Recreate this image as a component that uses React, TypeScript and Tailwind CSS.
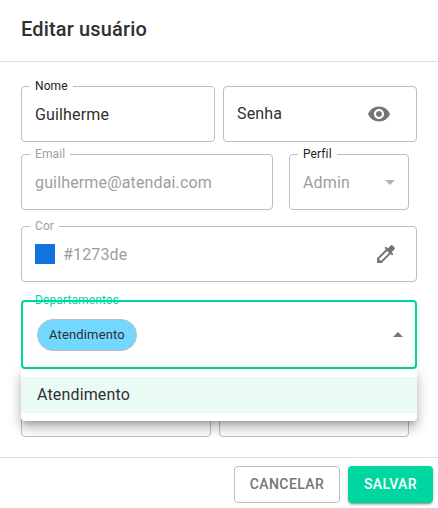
import type { ReactNode } from "react";

type FieldProps = {
  label?: string;
  muted?: boolean;
  className?: string;
  children?: ReactNode;
};

function Field({ label, muted, className = "", children }: FieldProps) {
  return (
    <fieldset
      className={`flex min-w-0 items-center rounded border border-[#bdbdbd] pl-[13px] ${
        label ? "-mt-[5px] h-[61px] pb-[5px]" : "h-14"
      } ${muted ? "text-[#9e9e9e]" : "text-[#303030]"} ${className}`}
    >
      {label && (
        <legend
          className={`-ml-[5px] h-[11px] px-[5px] text-[12px] leading-[11px] tracking-[0.11px] ${
            muted ? "text-[#9e9e9e]" : "text-[#212121]"
          }`}
        >
          {label}
        </legend>
      )}
      {children}
    </fieldset>
  );
}

function Icon({ d, className = "fill-[#757575]" }: { d: string; className?: string }) {
  return (
    <svg viewBox="0 0 24 24" className={`size-6 shrink-0 ${className}`}>
      <path d={d} />
    </svg>
  );
}

const EYE =
  "M12 4.5C7 4.5 2.73 7.61 1 12c1.73 4.39 6 7.5 11 7.5s9.27-3.11 11-7.5c-1.73-4.39-6-7.5-11-7.5zM12 17c-2.76 0-5-2.24-5-5s2.24-5 5-5 5 2.24 5 5-2.24 5-5 5zm0-8c-1.66 0-3 1.34-3 3s1.34 3 3 3 3-1.34 3-3-1.34-3-3-3z";
const DROPPER =
  "M20.71 5.63l-2.34-2.34c-.39-.39-1.02-.39-1.41 0l-3.12 3.12-1.93-1.91-1.41 1.41 1.42 1.42L3 16.25V21h4.75l8.92-8.92 1.42 1.42 1.41-1.41-1.92-1.92 3.12-3.12c.4-.4.4-1.03.01-1.42zM6.92 19L5 17.08l8.06-8.06 1.92 1.92L6.92 19z";

export default function App() {
  return (
    <div className="flex h-[508px] w-[438px] flex-col overflow-hidden bg-white font-['Roboto',sans-serif] text-[16px] leading-6 tracking-[0.15px] text-[#303030]">
      <header className="flex h-[62px] shrink-0 items-center border-b border-[#e0e0e0] px-[21px] pb-1">
        <h2 className="text-[20px] leading-8 font-medium">Editar usuário</h2>
      </header>

      <main className="flex h-[395px] shrink-0 flex-col pt-6 pr-[21px] pl-[21px]">
        <div className="flex gap-2">
          <Field label="Nome" className="w-[194px]">
            <span className="pt-0.5">Guilherme</span>
          </Field>
          <Field className="w-[194px] justify-between pr-[25px]">
            <span>Senha</span>
            <Icon d={EYE} />
          </Field>
        </div>

        <div className="mt-3 flex gap-4">
          <Field label="Email" muted className="w-[252px]">
            <span className="pt-0.5">guilherme@atendai.com</span>
          </Field>
          <Field label="Perfil" className="w-[120px] justify-between pr-[6px]">
            <span className="pt-0.5 text-[#9e9e9e]">Admin</span>
            <Icon d="M7 10l5 5 5-5z" className="fill-[#b3b3b3]" />
          </Field>
        </div>

        <div className="mt-4 flex">
          <Field label="Cor" muted className="w-[396px] pr-[18px]">
            <span className="mr-2 size-5 bg-[#1273de]" />
            <span className="flex-1 pt-0.5">#1273de</span>
            <Icon d={DROPPER} />
          </Field>
        </div>

        <div className="relative mt-[18px] flex h-[69px] shrink-0 items-center justify-between rounded border-2 border-[#00d69f] pr-[5px] pl-[14px]">
          <span className="absolute -top-[10px] left-3 text-[12px] leading-4 tracking-[0.11px] text-[#00d69f]">
            Departamentos
          </span>
          <span className="flex h-8 items-center rounded-full border border-[#bdbdbd] bg-[#73d8ff] px-[11px] text-[13px] leading-5">
            Atendimento
          </span>
          <Icon d="M7 14l5-5 5 5z" />
          <ul className="absolute top-[67px] -right-[2px] -left-[2px] z-10 rounded bg-white py-2 shadow-[0_5px_5px_-3px_rgba(0,0,0,0.2),0_8px_10px_1px_rgba(0,0,0,0.14),0_3px_14px_2px_rgba(0,0,0,0.12)]">
            <li className="flex h-9 items-center bg-[#eafbf6] px-4">Atendimento</li>
          </ul>
        </div>

        <div className="mt-3 flex gap-2">
          <Field className="w-[190px]" />
          <Field className="w-[190px]" />
        </div>
      </main>

      <footer className="flex h-[51px] shrink-0 items-start justify-end gap-2 border-t border-[#e0e0e0] pt-2 pr-[5px] text-[14px] font-medium tracking-[0.4px]">
        <button className="h-[37px] w-[106px] rounded border border-[#bdbdbd] pb-0.5 text-[#757575]">
          CANCELAR
        </button>
        <button className="h-[37px] w-[85px] rounded bg-[#00d69f] pb-0.5 text-white shadow-[0_3px_1px_-2px_rgba(0,0,0,0.2),0_2px_2px_0_rgba(0,0,0,0.14),0_1px_5px_0_rgba(0,0,0,0.12)]">
          SALVAR
        </button>
      </footer>
    </div>
  );
}
